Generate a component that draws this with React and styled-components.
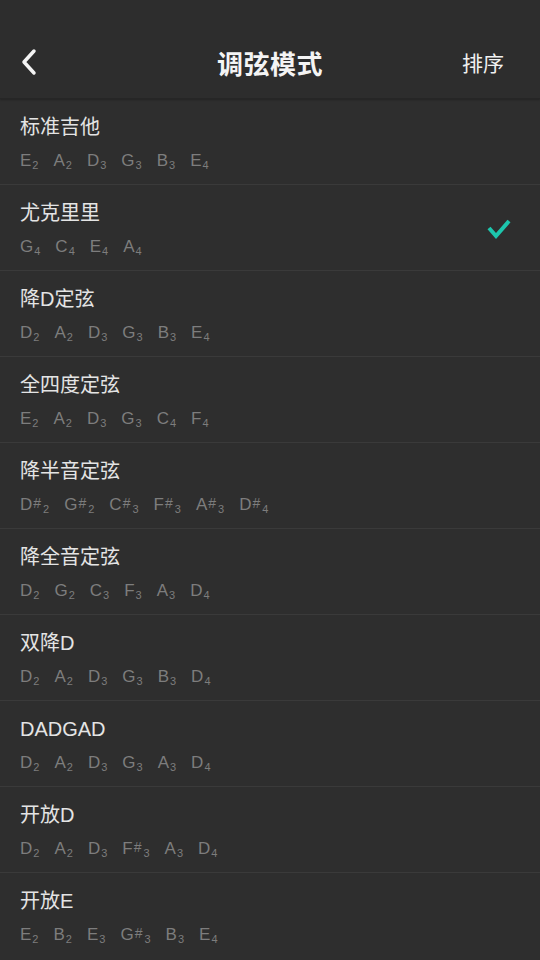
import React from "react";
import styled, { createGlobalStyle } from "styled-components";

const GlobalStyle = createGlobalStyle`
  html, body {
    margin: 0;
    padding: 0;
    background: #2e2e2e;
  }
  body {
    font-family: "Liberation Sans", "Noto Sans CJK SC", sans-serif;
  }
`;

const tunings = [
  { name: "标准吉他", notes: ["E2", "A2", "D3", "G3", "B3", "E4"] },
  { name: "尤克里里", notes: ["G4", "C4", "E4", "A4"], checked: true },
  { name: "降D定弦", notes: ["D2", "A2", "D3", "G3", "B3", "E4"] },
  { name: "全四度定弦", notes: ["E2", "A2", "D3", "G3", "C4", "F4"] },
  { name: "降半音定弦", notes: ["D#2", "G#2", "C#3", "F#3", "A#3", "D#4"] },
  { name: "降全音定弦", notes: ["D2", "G2", "C3", "F3", "A3", "D4"] },
  { name: "双降D", notes: ["D2", "A2", "D3", "G3", "B3", "D4"] },
  { name: "DADGAD", notes: ["D2", "A2", "D3", "G3", "A3", "D4"] },
  { name: "开放D", notes: ["D2", "A2", "D3", "F#3", "A3", "D4"] },
  { name: "开放E", notes: ["E2", "B2", "E3", "G#3", "B3", "E4"] },
];

const Page = styled.div`
  width: 540px;
  height: 960px;
  overflow: hidden;
  background: #2e2e2e;
`;

const Header = styled.header`
  height: 99px;
  box-sizing: border-box;
  padding-top: 25px;
  background: #2d2d2d;
  border-bottom: 1px solid #262626;
  box-shadow: 0 1px 2px rgba(0, 0, 0, 0.25);
  position: relative;
  z-index: 1;
`;

const Bar = styled.div`
  height: 74px;
  display: grid;
  grid-template-columns: 1fr auto 1fr;
  align-items: center;
`;

const BackButton = styled.div`
  padding-left: 19px;
  display: flex;
  align-items: center;
`;

const Title = styled.h1`
  margin: 0;
  font-size: 26px;
  font-weight: bold;
  color: #f4f4f4;
  letter-spacing: 0.5px;
`;

const SortButton = styled.div`
  justify-self: end;
  padding-right: 36px;
  font-size: 21px;
  color: #f0f0f0;
`;

const List = styled.ul`
  list-style: none;
  margin: 0;
  padding: 0;
`;

const Row = styled.li`
  height: 85px;
  border-bottom: 1px solid #3a3a3a;
  display: flex;
  align-items: center;
  justify-content: space-between;
  padding: 0 28px 0 20px;
  &:last-child {
    border-bottom: none;
  }
`;

const Info = styled.div`
  display: flex;
  flex-direction: column;
  padding-top: 1px;
`;

const Name = styled.div`
  font-size: 20px;
  line-height: 28px;
  color: #e4e4e4;
`;

const Notes = styled.div`
  display: flex;
  gap: 15px;
  margin-top: 11px;
  height: 20px;
  align-items: flex-end;
`;

const Note = styled.span`
  display: inline-flex;
  align-items: baseline;
  font-size: 17px;
  line-height: 20px;
  color: #7d7d7d;
`;

const Sharp = styled.span`
  font-size: 14px;
  position: relative;
  top: -2px;
  margin: 0 1px;
`;

const Octave = styled.span`
  font-size: 11px;
  position: relative;
  top: 3px;
  margin-left: 1px;
`;

function NoteLabel({ note }) {
  const letter = note[0];
  const sharp = note.includes("#");
  const octave = note[note.length - 1];
  return (
    <Note>
      {letter}
      {sharp && <Sharp>#</Sharp>}
      <Octave>{octave}</Octave>
    </Note>
  );
}

function Check() {
  return (
    <svg width="26" height="24" viewBox="0 0 26 24">
      <polyline
        points="3,12 10,20 23,5"
        fill="none"
        stroke="#1dc6ad"
        strokeWidth="4"
        strokeLinejoin="miter"
      />
    </svg>
  );
}

export default function App() {
  return (
    <Page>
      <GlobalStyle />
      <Header>
        <Bar>
          <BackButton>
            <svg width="20" height="28" viewBox="0 0 20 28">
              <polyline
                points="15,3 5,14 15,25"
                fill="none"
                stroke="#f4f4f4"
                strokeWidth="3.5"
                strokeLinecap="round"
                strokeLinejoin="round"
              />
            </svg>
          </BackButton>
          <Title>调弦模式</Title>
          <SortButton>排序</SortButton>
        </Bar>
      </Header>
      <List>
        {tunings.map((t) => (
          <Row key={t.name}>
            <Info>
              <Name>{t.name}</Name>
              <Notes>
                {t.notes.map((n, i) => (
                  <NoteLabel key={i} note={n} />
                ))}
              </Notes>
            </Info>
            {t.checked && <Check />}
          </Row>
        ))}
      </List>
    </Page>
  );
}
